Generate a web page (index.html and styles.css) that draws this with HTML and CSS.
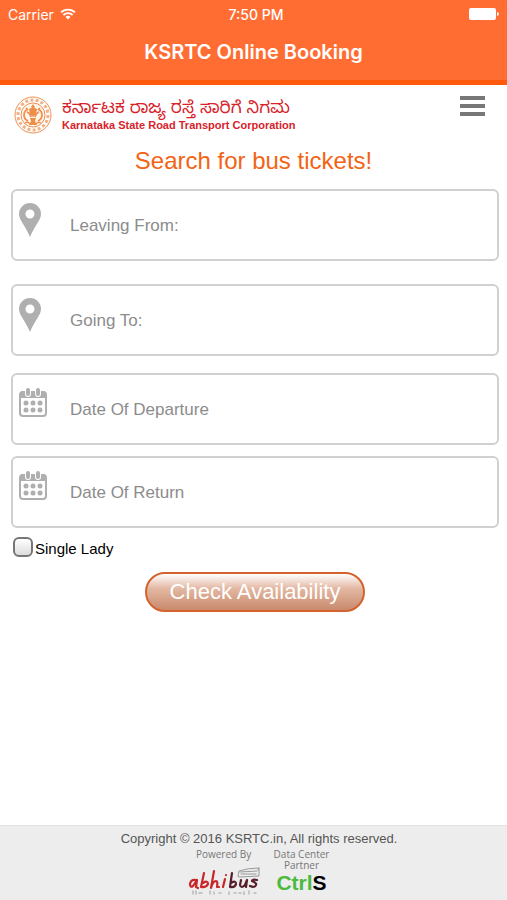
FILE: index.html
```html
<!DOCTYPE html>
<html lang="en">
<head>
  <meta charset="UTF-8">
  <meta name="viewport" content="width=device-width, initial-scale=1.0">
  <title>KSRTC Online Booking</title>
  <link rel="stylesheet" href="styles.css">
</head>
<body>
  <header class="app-bar">
    <div class="status-bar">
      <div class="carrier">
        <span>Carrier</span>
        <svg width="16" height="12" viewBox="0 0 16 12" fill="none" stroke="#fff" stroke-width="1.8">
          <path d="M1 4.4a10 10 0 0 1 14 0M3.4 7a6.6 6.6 0 0 1 9.2 0"/>
          <path d="M8 11.6 5.5 9a3.6 3.6 0 0 1 5 0z" fill="#fff" stroke="none"/>
        </svg>
      </div>
      <time class="clock">7:50 PM</time>
      <svg class="battery" width="30" height="12" viewBox="0 0 30 12" fill="#fff">
        <rect width="27" height="12" rx="2"/>
        <path d="M28 4q2 .5 2 2t-2 2z"/>
      </svg>
    </div>
    <h1>KSRTC Online Booking</h1>
  </header>

  <div class="brand-bar">
    <a href="#" class="brand">
      <svg width="38" height="38" viewBox="0 0 38 38" fill="none" stroke="#ee9152">
        <circle cx="19" cy="19" r="18"/>
        <circle cx="19" cy="19" r="15" stroke="#f3b184" stroke-width="3" stroke-dasharray="3 2.2"/>
        <circle cx="19" cy="19" r="12" fill="#fff6ec"/>
        <path d="M14 13q-4 2-4 6t4 6M24 13q4 2 4 6t-4 6M13 16q3 1 4 5M25 16q-3 1-4 5" stroke-width="1.8"/>
        <path d="M19 8l2 3-2 2-2-2zM15 13q4-3 8 0l-1 5-3 3-3-3zM16 22h6l-1 3 2 4h-8l2-4z" fill="#ee8f48" stroke="none"/>
        <path d="M11 27q3-2 5 1M27 27q-3-2-5 1M12 12l2 2M26 12l-2 2" stroke-width="1.3"/>
      </svg>
      <span class="brand-text">
        <span class="brand-kn" lang="kn">ಕರ್ನಾಟಕ ರಾಜ್ಯ ರಸ್ತೆ ಸಾರಿಗೆ ನಿಗಮ</span>
        <span class="brand-en">Karnataka State Road Transport Corporation</span>
      </span>
    </a>
    <button type="button" class="menu-btn" aria-label="Menu">
      <span></span>
      <span></span>
      <span></span>
    </button>
  </div>

  <main>
    <h2>Search for bus tickets!</h2>
    <form>
      <label class="field field-from">
        <svg width="22" height="34" viewBox="0 0 22 34"><path fill="#afafaf" fill-rule="evenodd" d="M11 0a11 11 0 0 1 11 11c0 6-6 11-11 23C6 22 0 17 0 11A11 11 0 0 1 11 0zm0 6.5a4.5 4.5 0 1 0 0 9 4.5 4.5 0 0 0 0-9z"/></svg>
        <input type="text" aria-label="Leaving From" placeholder="Leaving From:">
      </label>
      <label class="field field-to">
        <svg width="22" height="34" viewBox="0 0 22 34"><path fill="#afafaf" fill-rule="evenodd" d="M11 0a11 11 0 0 1 11 11c0 6-6 11-11 23C6 22 0 17 0 11A11 11 0 0 1 11 0zm0 6.5a4.5 4.5 0 1 0 0 9 4.5 4.5 0 0 0 0-9z"/></svg>
        <input type="text" aria-label="Going To" placeholder="Going To:">
      </label>
      <label class="field">
        <svg width="28" height="30" viewBox="0 0 28 30">
          <rect x="1" y="5" width="26" height="24" rx="3" fill="#fff" stroke="#afafaf" stroke-width="2"/>
          <path d="M1 11V7q0-3 3-3h20q3 0 3 3v4z" fill="#afafaf"/>
          <path d="M9 3v4M19 3v4" stroke="#fff" stroke-width="6" stroke-linecap="round"/>
          <path d="M9 3v4M19 3v4" stroke="#afafaf" stroke-width="4" stroke-linecap="round"/>
          <path d="M7 16h.01M14 16h.01M21 16h.01M7 23h.01M14 23h.01M21 23h.01" stroke="#afafaf" stroke-width="5" stroke-linecap="round"/>
        </svg>
        <input type="text" aria-label="Date Of Departure" placeholder="Date Of Departure">
      </label>
      <label class="field">
        <svg width="28" height="30" viewBox="0 0 28 30">
          <rect x="1" y="5" width="26" height="24" rx="3" fill="#fff" stroke="#afafaf" stroke-width="2"/>
          <path d="M1 11V7q0-3 3-3h20q3 0 3 3v4z" fill="#afafaf"/>
          <path d="M9 3v4M19 3v4" stroke="#fff" stroke-width="6" stroke-linecap="round"/>
          <path d="M9 3v4M19 3v4" stroke="#afafaf" stroke-width="4" stroke-linecap="round"/>
          <path d="M7 16h.01M14 16h.01M21 16h.01M7 23h.01M14 23h.01M21 23h.01" stroke="#afafaf" stroke-width="5" stroke-linecap="round"/>
        </svg>
        <input type="text" aria-label="Date Of Return" placeholder="Date Of Return">
      </label>
      <div class="single-lady">
        <input type="checkbox" id="singleLady">
        <label for="singleLady">Single Lady</label>
      </div>
      <button type="submit" class="check-btn">Check Availability</button>
    </form>
  </main>

  <footer>
    <p>Copyright © 2016 KSRTC.in, All rights reserved.</p>
    <div class="partners">
      <div class="partner">
        <span>Powered By</span>
        <svg width="72" height="28" viewBox="0 0 72 28" fill="none" stroke-linecap="round" stroke-linejoin="round" role="img" aria-label="abhibus">
          <g stroke="#c9252b" stroke-width="2.2">
            <path d="M8 13q-5-1-6 4 0 4 3 2l4-6-1 7 2 1"/>
            <path d="M16 6l-3 14q5 1 7-3 0-4-5-1"/>
            <path d="M26 4l-3 17q2-7 5-7 2 0 1 6l2 0"/>
            <path d="M37 12l-2 8M38 8v.1"/>
          </g>
          <g stroke="#571f2c" stroke-width="2.2">
            <path d="M44 6l-2 14q5 1 6-3 0-4-5-1"/>
            <path d="M53 13l-1 5q1 4 5 0l2-5-1 7"/>
            <path d="M69 13q-5-1-5 1 5 2 4 4-1 3-6 1"/>
          </g>
          <path d="M50 9l1-5q9-3 20-3v8l-19 1zM52 5l17-1M53 7h15M70 3l1-2" stroke="#999"/>
          <path d="M5 24v3M8 24v3M11 26h3M22 24v3M26 25v2M31 26h2M41 25v3M46 26h2M51 26h2M56 25v3M61 24v3M66 26h2" stroke="#b9b9b9" stroke-width="1.5"/>
        </svg>
      </div>
      <div class="partner">
        <span>Data Center<br>Partner</span>
        <strong class="ctrls">Ctrl<b>S</b></strong>
      </div>
    </div>
  </footer>
</body>
</html>
```
FILE: styles.css
```css
* {
  box-sizing: border-box;
}

body {
  margin: 0;
  min-height: 100vh;
  display: flex;
  flex-direction: column;
  font-family: "Liberation Sans", Arial, sans-serif;
  background: #fff;
}

.app-bar {
  background: #ff6d33;
  border-bottom: 5px solid #ff5a0c;
  color: #fff;
  font-family: Inter, sans-serif;
}

.status-bar {
  display: grid;
  grid-template-columns: 1fr auto 1fr;
  align-items: center;
  height: 28px;
  padding: 0 8px;
  font-size: 14px;
}

.carrier {
  display: flex;
  align-items: center;
  gap: 6px;
}

.clock {
  padding-left: 5px;
  font-weight: 500;
}

.battery {
  justify-self: end;
}

h1 {
  margin: 0;
  padding: 12px 0 16px;
  font-size: 20px;
  line-height: 24px;
  font-weight: 600;
  text-align: center;
}

.brand-bar {
  display: flex;
  justify-content: space-between;
  align-items: flex-start;
  padding: 11px 22px 0 14px;
}

.brand {
  display: flex;
  gap: 10px;
  color: #d8232a;
  text-decoration: none;
}

.brand-text {
  display: flex;
  flex-direction: column;
  padding-top: 2px;
}

.brand-kn {
  margin-bottom: -6px;
  font-family: "Noto Sans Kannada", "Noto Sans", sans-serif;
  font-size: 17px;
  line-height: 26px;
}

.brand-en {
  font-size: 11px;
  line-height: 14px;
  font-weight: bold;
}

.menu-btn {
  display: flex;
  flex-direction: column;
  gap: 4px;
  padding: 0;
  border: 0;
  background: none;
  cursor: pointer;
}

.menu-btn span {
  width: 25px;
  height: 4px;
  background: #777;
}

h2 {
  margin: 13px 0 14px;
  font-size: 24px;
  line-height: 28px;
  font-weight: normal;
  text-align: center;
  color: #f26413;
}

form {
  display: flex;
  flex-direction: column;
  padding: 0 8px 0 11px;
}

.field {
  display: flex;
  align-items: flex-start;
  height: 72px;
  margin-bottom: 11px;
  border: 2px solid #d0d0d0;
  border-radius: 6px;
}

.field svg {
  flex: none;
  margin: 12px 0 0 6px;
}

.field-from {
  margin-bottom: 23px;
}

.field-to {
  margin-bottom: 17px;
}

.field-from svg,
.field-to svg {
  margin-right: 6px;
}

.field input {
  flex: 1;
  min-width: 0;
  height: 100%;
  padding: 2px 10px 0 23px;
  border: 0;
  background: none;
  font: 17px "Liberation Sans", Arial, sans-serif;
}

.field input::placeholder {
  color: #8c8c8c;
}

.single-lady {
  display: flex;
  align-items: center;
  gap: 2px;
  margin: -2px 2px 15px;
  font-size: 15px;
}

.single-lady label {
  padding-top: 2px;
}

.single-lady input {
  appearance: none;
  width: 20px;
  height: 20px;
  margin: 0;
  border: 2px solid #777;
  border-radius: 6px;
  background: linear-gradient(#fff, #ddd);
}

.single-lady input:checked {
  background: #f26413;
}

.check-btn {
  align-self: center;
  height: 40px;
  padding: 0 23px;
  border: 2px solid #d4622c;
  border-radius: 20px;
  background: linear-gradient(#fff, #e3b8a3 40%, #c98a6d);
  color: #fff;
  font: 22px "Liberation Sans", Arial, sans-serif;
  cursor: pointer;
}

footer {
  margin-top: auto;
  min-height: 75px;
  padding-top: 5px;
  border-top: 1px solid #e2e2e2;
  background: #ededed;
  color: #555;
}

footer p {
  margin: 0 0 2px;
  padding-left: 11px;
  font-size: 13px;
  line-height: 16px;
  text-align: center;
}

.partners {
  display: flex;
  justify-content: center;
  gap: 14px;
  padding-left: 10px;
}

.partner {
  display: flex;
  flex-direction: column;
  align-items: center;
  justify-content: space-between;
  font: 10px/11px "Open Sans", sans-serif;
  text-align: center;
  color: #777;
}

.ctrls {
  font: bold 21px/24px "Liberation Sans", Arial, sans-serif;
  color: #4cb93f;
}

.ctrls b {
  color: #000;
}
```
